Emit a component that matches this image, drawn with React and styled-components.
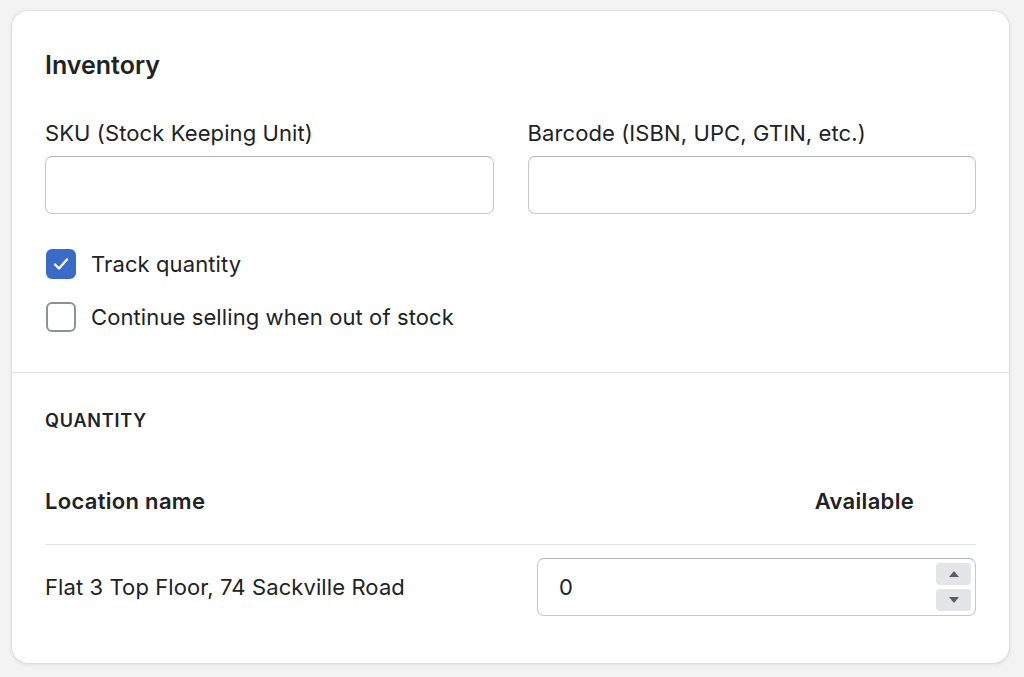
import React, { useState } from 'react'
import styled, { createGlobalStyle } from 'styled-components'

const GlobalStyle = createGlobalStyle`
  html, body {
    margin: 0;
    padding: 0;
    background: #f3f3f3;
    font-family: Inter, "Liberation Sans", Arial, sans-serif;
    color: #202223;
  }
  * { box-sizing: border-box; }
`

const Page = styled.div`
  padding: 11px 15px 15px 12px;
  min-height: 677px;
`

const Card = styled.div`
  background: #fff;
  border-radius: 16px;
  box-shadow: 0 0 0 1px rgba(63, 63, 68, 0.05), 0 1px 4px rgba(63, 63, 68, 0.15);
  width: 997px;
  overflow: hidden;
`

const Section = styled.div`
  padding: ${p => p.pad || '38px 33px 40px 33px'};
  border-top: ${p => (p.divided ? '1px solid #e1e3e5' : 'none')};
`

const Title = styled.h2`
  margin: 0 0 38px;
  font-size: 25px;
  font-weight: 600;
  line-height: 32px;
`

const FieldGrid = styled.div`
  display: grid;
  grid-template-columns: 1fr 1fr;
  gap: 34px;
`

const Field = styled.label`
  display: flex;
  flex-direction: column;
  gap: 9px;
`

const Label = styled.span`
  font-size: 22px;
  line-height: 28px;
  letter-spacing: 0.1px;
`

const Input = styled.input`
  height: 58px;
  width: 100%;
  border: 1px solid #c4c8cc;
  border-top-color: #aeb4b9;
  border-radius: 7px;
  padding: 0 21px;
  font: inherit;
  font-size: 22px;
  color: #202223;
  outline: none;
  background: #fff;
`

const Checks = styled.div`
  display: flex;
  flex-direction: column;
  gap: 23px;
  margin-top: 35px;
`

const CheckRow = styled.label`
  display: flex;
  align-items: center;
  gap: 15px;
  font-size: 22px;
  letter-spacing: 0.1px;
  line-height: 30px;
  cursor: pointer;
  padding-left: 1px;
`

const Box = styled.span`
  width: 30px;
  height: 30px;
  border-radius: 6px;
  border: 2px solid ${p => (p.checked ? '#3b6bc9' : '#8c9196')};
  background: ${p => (p.checked ? '#3b6bc9' : '#fff')};
  display: flex;
  align-items: center;
  justify-content: center;
  flex-shrink: 0;
`

const Overline = styled.h3`
  margin: 0 0 53px;
  font-size: 18px;
  font-weight: 600;
  letter-spacing: 0.8px;
  line-height: 24px;
  text-transform: uppercase;
`

const TableHead = styled.div`
  display: flex;
  justify-content: space-between;
  align-items: center;
  padding: 0 62px 28px 0;
  border-bottom: 1px solid #e1e3e5;
  font-size: 22px;
  font-weight: 600;
  letter-spacing: 0.3px;
  line-height: 30px;
`

const TableRow = styled.div`
  display: grid;
  grid-template-columns: 1fr 439px;
  align-items: center;
  padding-top: 13px;
  font-size: 22px;
  letter-spacing: 0.1px;
`

const NumberWrap = styled.div`
  position: relative;
`

const Spinner = styled.div`
  position: absolute;
  top: 5px;
  right: 5px;
  bottom: 5px;
  width: 35px;
  display: flex;
  flex-direction: column;
  gap: 4px;
`

const SpinButton = styled.button`
  flex: 1;
  border: none;
  border-radius: 4px;
  background: #e4e5e7;
  padding: 0;
  display: flex;
  align-items: center;
  justify-content: center;
  cursor: pointer;
`

const Arrow = ({ down }) => (
  <svg width="10" height="6" viewBox="0 0 10 6">
    <path d={down ? 'M0 0h10L5 6z' : 'M0 6h10L5 0z'} fill="#5c5f62" />
  </svg>
)

const Check = ({ checked, onToggle, children }) => (
  <CheckRow onClick={onToggle}>
    <Box checked={checked}>
      {checked && (
        <svg width="16" height="14" viewBox="0 0 16 14">
          <path d="M2 7.5l4 4L14 2.5" fill="none" stroke="#fff" strokeWidth="2.4" strokeLinecap="round" strokeLinejoin="round" />
        </svg>
      )}
    </Box>
    {children}
  </CheckRow>
)

export default function App() {
  const [track, setTrack] = useState(true)
  const [cont, setCont] = useState(false)
  const [qty, setQty] = useState(0)

  return (
    <>
      <GlobalStyle />
      <Page>
        <Card>
          <Section>
            <Title>Inventory</Title>
            <FieldGrid>
              <Field>
                <Label>SKU (Stock Keeping Unit)</Label>
                <Input />
              </Field>
              <Field>
                <Label>Barcode (ISBN, UPC, GTIN, etc.)</Label>
                <Input />
              </Field>
            </FieldGrid>
            <Checks>
              <Check checked={track} onToggle={() => setTrack(!track)}>Track quantity</Check>
              <Check checked={cont} onToggle={() => setCont(!cont)}>Continue selling when out of stock</Check>
            </Checks>
          </Section>
          <Section divided pad="36px 33px 47px 33px">
            <Overline>Quantity</Overline>
            <TableHead>
              <span>Location name</span>
              <span>Available</span>
            </TableHead>
            <TableRow>
              <span>Flat 3 Top Floor, 74 Sackville Road</span>
              <NumberWrap>
                <Input value={qty} onChange={e => setQty(e.target.value)} />
                <Spinner>
                  <SpinButton onClick={() => setQty(Number(qty) + 1)}><Arrow /></SpinButton>
                  <SpinButton onClick={() => setQty(Number(qty) - 1)}><Arrow down /></SpinButton>
                </Spinner>
              </NumberWrap>
            </TableRow>
          </Section>
        </Card>
      </Page>
    </>
  )
}
